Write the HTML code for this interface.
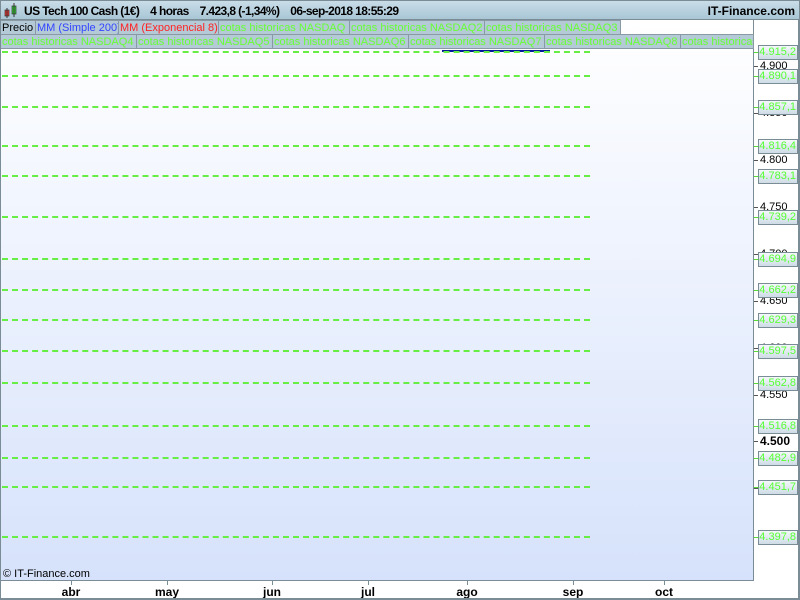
<!DOCTYPE html>
<html><head><meta charset="utf-8"><style>
*{margin:0;padding:0;box-sizing:border-box}
body{width:800px;height:600px;position:relative;overflow:hidden;background:#fff;font-family:"Liberation Sans",Arial,sans-serif;font-size:11px}
#title{position:absolute;left:0;top:0;width:800px;height:20px;background:linear-gradient(#c9dde8,#a9c6d6);border:1px solid #7a8c96;}
#title span{position:absolute;top:3px;font-weight:bold;font-size:11px;color:#000}
#chart{position:absolute;left:0;top:20px;width:754px;height:561px;background:linear-gradient(#ffffff,#d6e2fb);border:1px solid #7a8c96;border-top:none}
.lg{position:absolute;height:15px;line-height:14px;background:#b4cad7;border:1px solid #8a9aa4;padding-left:1px;white-space:nowrap;overflow:hidden;font-size:11px;color:#66ff33}
.dl{position:absolute;left:2px;width:588px;height:0;border-top:2px dashed #66ee44}
.lab{position:absolute;left:758px;width:40px;height:15px;border:1px solid #7a8c96;background:linear-gradient(#f4f8fb,#cfdce6);color:#55ff33;font-size:11px;line-height:13px;text-align:right;padding-right:1px}
.tk{position:absolute;left:754px;width:5px;height:1px;background:#55dd33}
.ax{position:absolute;left:760px;font-size:11px;color:#000}
.axt{position:absolute;left:754px;width:4px;height:1px;background:#555}
.xl{position:absolute;top:585px;font-weight:bold;font-size:12px;transform:translateX(-50%)}
.xt{position:absolute;top:581px;width:1px;height:4px;background:#7a8c96}
</style></head><body>
<div id="title">
<svg style="position:absolute;left:2px;top:2px" width="16" height="16"><rect x="2" y="7" width="4" height="6" fill="#e33" stroke="#333" stroke-width=".7"/><line x1="4" y1="5" x2="4" y2="15" stroke="#333"/><rect x="9" y="3" width="4" height="8" fill="#3c3" stroke="#333" stroke-width=".7"/><line x1="11" y1="0" x2="11" y2="14" stroke="#333"/></svg>
<span style="left:23px;font-size:12px;letter-spacing:-0.6px">US Tech 100 Cash (1€)&nbsp;&nbsp;&nbsp; 4 horas&nbsp;&nbsp;&nbsp; 7.423,8 (-1,34%)&nbsp;&nbsp;&nbsp; 06-sep-2018 18:55:29</span>
<span style="right:4px;font-size:12px">IT-Finance.com</span>
</div>
<div id="chart"></div>
<div class="lg" style="left:0;top:20px;width:36px;color:#000">Precio</div>
<div class="lg" style="left:35px;top:20px;width:84px;color:#3344ff">MM (Simple 200)</div>
<div class="lg" style="left:118px;top:20px;width:101px;color:#ff2222">MM (Exponencial 8)</div>
<div class="lg" style="left:218px;top:20px;width:132px">cotas historicas NASDAQ</div>
<div class="lg" style="left:349px;top:20px;width:136px">cotas historicas NASDAQ2</div>
<div class="lg" style="left:484px;top:20px;width:137px">cotas historicas NASDAQ3</div>
<div class="lg" style="left:0;top:34px;width:137px">cotas historicas NASDAQ4</div>
<div class="lg" style="left:136px;top:34px;width:137px">cotas historicas NASDAQ5</div>
<div class="lg" style="left:272px;top:34px;width:137px">cotas historicas NASDAQ6</div>
<div class="lg" style="left:408px;top:34px;width:137px">cotas historicas NASDAQ7</div>
<div class="lg" style="left:544px;top:34px;width:137px">cotas historicas NASDAQ8</div>
<div class="lg" style="left:680px;top:34px;width:74px">cotas historicas NASDAQ9</div>
<div style="position:absolute;left:442px;top:50px;width:108px;height:2px;background:#001a99"></div>

<div class="axt" style="top:66px"></div><div class="ax" style="top:60px">4.900</div>
<div class="axt" style="top:113px"></div><div class="ax" style="top:107px">4.850</div>
<div class="axt" style="top:160px"></div><div class="ax" style="top:154px">4.800</div>
<div class="axt" style="top:207px"></div><div class="ax" style="top:201px">4.750</div>
<div class="axt" style="top:254px"></div><div class="ax" style="top:248px">4.700</div>
<div class="axt" style="top:301px"></div><div class="ax" style="top:295px">4.650</div>
<div class="axt" style="top:348px"></div><div class="ax" style="top:342px">4.600</div>
<div class="axt" style="top:395px"></div><div class="ax" style="top:389px">4.550</div>
<div class="axt" style="top:441px"></div><div class="ax" style="top:434px;font-weight:bold;font-size:12px">4.500</div>
<div class="axt" style="top:488px"></div><div class="ax" style="top:482px">4.450</div>

<div class="dl" style="top:51px"></div><div class="tk" style="top:52px"></div><div class="lab" style="top:45px">4.915,2</div>
<div class="dl" style="top:75px"></div><div class="tk" style="top:76px"></div><div class="lab" style="top:69px">4.890,1</div>
<div class="dl" style="top:106px"></div><div class="tk" style="top:107px"></div><div class="lab" style="top:100px">4.857,1</div>
<div class="dl" style="top:145px"></div><div class="tk" style="top:146px"></div><div class="lab" style="top:139px">4.816,4</div>
<div class="dl" style="top:175px"></div><div class="tk" style="top:176px"></div><div class="lab" style="top:169px">4.783,1</div>
<div class="dl" style="top:216px"></div><div class="tk" style="top:217px"></div><div class="lab" style="top:210px">4.739,2</div>
<div class="dl" style="top:258px"></div><div class="tk" style="top:259px"></div><div class="lab" style="top:252px">4.694,9</div>
<div class="dl" style="top:289px"></div><div class="tk" style="top:290px"></div><div class="lab" style="top:283px">4.662,2</div>
<div class="dl" style="top:319px"></div><div class="tk" style="top:320px"></div><div class="lab" style="top:313px">4.629,3</div>
<div class="dl" style="top:350px"></div><div class="tk" style="top:351px"></div><div class="lab" style="top:344px">4.597,5</div>
<div class="dl" style="top:382px"></div><div class="tk" style="top:383px"></div><div class="lab" style="top:376px">4.562,8</div>
<div class="dl" style="top:425px"></div><div class="tk" style="top:426px"></div><div class="lab" style="top:419px">4.516,8</div>
<div class="dl" style="top:457px"></div><div class="tk" style="top:458px"></div><div class="lab" style="top:451px">4.482,9</div>
<div class="dl" style="top:486px"></div><div class="tk" style="top:487px"></div><div class="lab" style="top:480px">4.451,7</div>
<div class="dl" style="top:536px"></div><div class="tk" style="top:537px"></div><div class="lab" style="top:530px">4.397,8</div>

<div style="position:absolute;left:3px;top:568px;font-size:11px">© IT-Finance.com</div>
<div class="xt" style="left:71px"></div><div class="xl" style="left:71px">abr</div>
<div class="xt" style="left:167px"></div><div class="xl" style="left:167px">may</div>
<div class="xt" style="left:272px"></div><div class="xl" style="left:272px">jun</div>
<div class="xt" style="left:368px"></div><div class="xl" style="left:368px">jul</div>
<div class="xt" style="left:467px"></div><div class="xl" style="left:467px">ago</div>
<div class="xt" style="left:573px"></div><div class="xl" style="left:573px">sep</div>
<div class="xt" style="left:664px"></div><div class="xl" style="left:664px">oct</div>
<div style="position:absolute;left:0;top:598px;width:800px;height:2px;background:#7a8c96"></div>
<div style="position:absolute;left:798px;top:20px;width:2px;height:580px;background:#7a8c96"></div>
<div style="position:absolute;left:0;top:20px;width:1px;height:580px;background:#7a8c96"></div>
</body></html>
